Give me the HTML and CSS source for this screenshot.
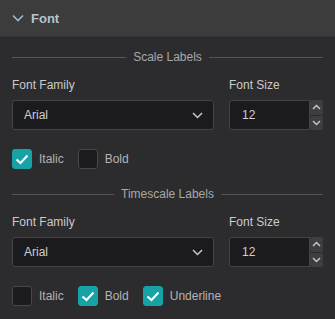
FILE: index.html
```html
<!DOCTYPE html>
<html>
<head>
<meta charset="utf-8">
<link rel="stylesheet" href="styles.css">
</head>
<body>
<div class="panel">
  <div class="header">
    <svg class="hchev" width="12" height="8" viewBox="0 0 12 8"><path d="M1 1.5 L6 6.5 L11 1.5" fill="none" stroke="#9fb8cf" stroke-width="1.6"/></svg>
    <span class="htitle">Font</span>
  </div>
  <div class="content">
    <div class="divider"><span class="line"></span><span class="dtext">Scale Labels</span><span class="line"></span></div>
    <div class="fields">
      <div class="field grow">
        <div class="label">Font Family</div>
        <div class="select"><span>Arial</span>
          <svg width="11" height="7" viewBox="0 0 11 7"><path d="M1 1 L5.5 5.5 L10 1" fill="none" stroke="#c8c8c8" stroke-width="1.5"/></svg>
        </div>
      </div>
      <div class="field size">
        <div class="label">Font Size</div>
        <div class="numwrap">
          <div class="num">12</div>
          <div class="spin">
            <div class="sbtn"><svg width="9" height="6" viewBox="0 0 9 6"><path d="M1 5 L4.5 1.5 L8 5" fill="none" stroke="#b8c6d4" stroke-width="1.5"/></svg></div>
            <div class="sbtn"><svg width="9" height="6" viewBox="0 0 9 6"><path d="M1 1 L4.5 4.5 L8 1" fill="none" stroke="#b8c6d4" stroke-width="1.5"/></svg></div>
          </div>
        </div>
      </div>
    </div>
    <div class="checks">
      <label class="check"><span class="box on"><svg width="14" height="11" viewBox="0 0 14 11"><path d="M1.5 5.5 L5.5 9 L12.5 1.5" fill="none" stroke="#fff" stroke-width="2"/></svg></span>Italic</label>
      <label class="check"><span class="box"></span>Bold</label>
    </div>

    <div class="divider"><span class="line"></span><span class="dtext">Timescale Labels</span><span class="line"></span></div>
    <div class="fields">
      <div class="field grow">
        <div class="label">Font Family</div>
        <div class="select"><span>Arial</span>
          <svg width="11" height="7" viewBox="0 0 11 7"><path d="M1 1 L5.5 5.5 L10 1" fill="none" stroke="#c8c8c8" stroke-width="1.5"/></svg>
        </div>
      </div>
      <div class="field size">
        <div class="label">Font Size</div>
        <div class="numwrap">
          <div class="num">12</div>
          <div class="spin">
            <div class="sbtn"><svg width="9" height="6" viewBox="0 0 9 6"><path d="M1 5 L4.5 1.5 L8 5" fill="none" stroke="#b8c6d4" stroke-width="1.5"/></svg></div>
            <div class="sbtn"><svg width="9" height="6" viewBox="0 0 9 6"><path d="M1 1 L4.5 4.5 L8 1" fill="none" stroke="#b8c6d4" stroke-width="1.5"/></svg></div>
          </div>
        </div>
      </div>
    </div>
    <div class="checks">
      <label class="check"><span class="box"></span>Italic</label>
      <label class="check"><span class="box on"><svg width="14" height="11" viewBox="0 0 14 11"><path d="M1.5 5.5 L5.5 9 L12.5 1.5" fill="none" stroke="#fff" stroke-width="2"/></svg></span>Bold</label>
      <label class="check"><span class="box on"><svg width="14" height="11" viewBox="0 0 14 11"><path d="M1.5 5.5 L5.5 9 L12.5 1.5" fill="none" stroke="#fff" stroke-width="2"/></svg></span>Underline</label>
    </div>
  </div>
</div>
</body>
</html>
```
FILE: styles.css
```css
html, body {
  margin: 0;
  padding: 0;
  background: #2c2c2e;
  font-family: "Liberation Sans", Arial, sans-serif;
  font-size: 12px;
  color: #c8c8c8;
}
.panel {
  width: 335px;
  height: 319px;
  background: #2c2c2e;
}
.header {
  height: 37px;
  box-sizing: border-box;
  background: #3c3c3c;
  border-bottom: 1px solid #333335;
  display: flex;
  align-items: center;
  padding-left: 12px;
}
.hchev { margin-right: 7px; }
.htitle {
  font-weight: bold;
  font-size: 13px;
  color: #b9c3cd;
}
.content {
  padding: 12px 12px 0 12px;
}
.divider {
  display: flex;
  align-items: center;
  gap: 7px;
  height: 16px;
  color: #a8a8a8;
}
.line {
  flex: 1;
  height: 1px;
  background: #555558;
}
.fields {
  display: flex;
  gap: 15px;
  margin-top: 13px;
}
.grow { flex: 1; }
.size { width: 94px; }
.label {
  height: 14px;
  line-height: 14px;
  margin-bottom: 8px;
  color: #cacaca;
}
.select {
  height: 30px;
  box-sizing: border-box;
  background: #1b1b1d;
  border: 1px solid #444446;
  border-radius: 3px;
  display: flex;
  align-items: center;
  justify-content: space-between;
  padding: 0 10px 0 11px;
  color: #cfcfcf;
}
.numwrap {
  display: flex;
  height: 30px;
}
.num {
  flex: 1;
  box-sizing: border-box;
  background: #1b1b1d;
  border: 1px solid #444446;
  border-radius: 3px 0 0 3px;
  padding-left: 12px;
  display: flex;
  align-items: center;
  color: #cfcfcf;
}
.spin {
  width: 13px;
  display: flex;
  flex-direction: column;
  gap: 1px;
}
.sbtn {
  flex: 1;
  background: #3e3e40;
  border-radius: 2px;
  display: flex;
  align-items: center;
  justify-content: center;
}
.checks {
  display: flex;
  gap: 14px;
  margin-top: 19px;
  margin-bottom: 17px;
}
.check {
  display: flex;
  align-items: center;
  gap: 7px;
  color: #b4b4b4;
}
.box {
  width: 20px;
  height: 20px;
  box-sizing: border-box;
  border: 1px solid #48484a;
  border-radius: 3px;
  background: #1b1b1d;
  display: flex;
  align-items: center;
  justify-content: center;
}
.box.on {
  background: #17a3a6;
  border-color: #17a3a6;
}
```
